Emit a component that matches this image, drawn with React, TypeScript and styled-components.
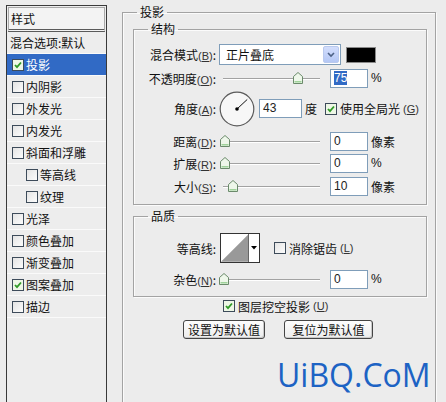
import React from "react";
import styled, { createGlobalStyle } from "styled-components";

const GlobalStyle = createGlobalStyle`
  body {
    margin: 0;
    background: #ececec;
    font-family: "Noto Sans CJK SC", "Noto Sans", sans-serif;
    font-size: 12px;
    color: #111;
  }
`;

const Frame = styled.div`
  position: relative;
  width: 446px;
  height: 402px;
  overflow: hidden;
  display: flex;
  align-items: flex-start;
  background: #ececec;
`;

/* ---------- left style list ---------- */

const StyleList = styled.div`
  margin: 5px 0 0 6px;
  width: 99px;
  height: 420px;
  border: 1px solid #3a3a3a;
  border-bottom: none;
  background: #ededed;
  flex-shrink: 0;
`;

const ListHeader = styled.div`
  margin: 1px 1px 0;
  height: 21px;
  line-height: 21px;
  padding-left: 2px;
  border: 1px solid #a9a9a9;
  border-bottom: 3px double #5a5a5a;
  background: #f3f3f3;
`;

const ListRow = styled.div<{ $indent?: number; $selected?: boolean }>`
  height: 21px;
  display: flex;
  align-items: center;
  gap: 2px;
  padding-left: ${(p) => p.$indent ?? 3}px;
  border-bottom: 1px solid #fafafa;
  background: ${(p) => (p.$selected ? "#316ac5" : "transparent")};
  color: ${(p) => (p.$selected ? "#fff" : "#111")};
  white-space: nowrap;
`;

const Box = styled.span<{ $checked?: boolean }>`
  width: 12px;
  height: 12px;
  box-sizing: border-box;
  border: 1px solid #3d4b5a;
  background: ${(p) => (p.$checked ? "#eef7e6" : "linear-gradient(135deg, #e4e4e4, #fcfcfc)")};
  display: inline-flex;
  align-items: center;
  justify-content: center;
  flex-shrink: 0;
`;

const Check = ({ checked }: { checked?: boolean }) => (
  <Box $checked={checked}>
    {checked && (
      <svg width="8" height="8" viewBox="0 0 8 8">
        <path d="M1 4 L3 6.2 L7 1.5" fill="none" stroke="#2f9a26" strokeWidth="1.8" />
      </svg>
    )}
  </Box>
);

/* ---------- right panel ---------- */

const Group = styled.fieldset<{ $w: number; $mt: number; $ml: number; $h?: number }>`
  box-sizing: border-box;
  width: ${(p) => p.$w}px;
  ${(p) => (p.$h ? `height: ${p.$h}px;` : "")}
  margin: ${(p) => p.$mt}px 0 0 ${(p) => p.$ml}px;
  padding: 0;
  min-width: 0;
  border: 1px solid #a3a3a3;
  box-shadow: inset 1px 1px 0 #fbfbfb, 1px 1px 0 #fbfbfb;
  flex-shrink: 0;
`;

const Legend = styled.legend`
  margin-left: 14px;
  padding: 0 3px;
  line-height: 14px;
  font-size: 12px;
`;

const Section = styled.div<{ $pt: number; $pb: number }>`
  display: flex;
  flex-direction: column;
  padding: ${(p) => p.$pt}px 0 ${(p) => p.$pb}px;
`;

const Row = styled.div<{ $h: number; $mt?: number }>`
  display: flex;
  align-items: center;
  height: ${(p) => p.$h}px;
  margin-top: ${(p) => p.$mt ?? 0}px;
  white-space: nowrap;
`;

const Label = styled.span`
  width: 82px;
  flex-shrink: 0;
  text-align: right;
`;

const Key = styled.u`
  font-family: "Liberation Sans", Arial, sans-serif;
  font-size: 11px;
  color: #333;
`;

const Paren = styled.span`
  font-family: "Liberation Sans", Arial, sans-serif;
  font-size: 11px;
  color: #333;
`;

const Hot = ({ k }: { k: string }) => (
  <Paren>
    (<Key>{k}</Key>)
  </Paren>
);

const Select = styled.div`
  margin-left: 3px;
  width: 122px;
  height: 21px;
  box-sizing: border-box;
  border: 1px solid #7f9db9;
  background: #fff;
  display: flex;
  align-items: center;
`;

const SelectText = styled.span`
  flex: 1;
  padding-left: 6px;
`;

const SelectButton = styled.span`
  width: 16px;
  height: 17px;
  margin-right: 1px;
  border-radius: 2px;
  background: linear-gradient(#d3defc, #b4c7f5);
  border: 1px solid #b9c9ee;
  box-sizing: border-box;
  display: flex;
  align-items: center;
  justify-content: center;
`;

const Swatch = styled.span`
  margin-left: 5px;
  width: 30px;
  height: 16px;
  box-sizing: border-box;
  background: #000;
  border: 1px solid #8a8a8a;
`;

const Track = styled.div<{ $ml: number }>`
  position: relative;
  margin-left: ${(p) => p.$ml}px;
  width: 97px;
  height: 20px;
  flex-shrink: 0;
  &::before {
    content: "";
    position: absolute;
    left: 0;
    right: 0;
    top: 10px;
    height: 1px;
    background: #a2a2a2;
    box-shadow: 0 1px 0 #fff;
  }
`;

const Thumb = styled.svg`
  position: absolute;
  top: 4px;
`;

const Slider = ({ at, ml = 7 }: { at: number; ml?: number }) => (
  <Track $ml={ml}>
    <Thumb width="10" height="12" viewBox="0 0 10 12" style={{ left: at - 5 }}>
      <path d="M5 0.5 L9.5 4.5 V11.5 H0.5 V4.5 Z" fill="#eef7ea" stroke="#6b8a6b" />
      <path d="M1.5 9 H8.5 V10.5 H1.5 Z" fill="#9fd29a" />
    </Thumb>
  </Track>
);

const Field = styled.div<{ $w: number; $ml: number }>`
  margin-left: ${(p) => p.$ml}px;
  width: ${(p) => p.$w}px;
  height: 19px;
  box-sizing: border-box;
  border: 1px solid #7f9db9;
  background: #fff;
  padding-left: 3px;
  font-family: "Liberation Sans", Arial, sans-serif;
  font-size: 12px;
  line-height: 17px;
  color: #222;
  flex-shrink: 0;
`;

const Picked = styled.span`
  background: #316ac5;
  color: #fff;
`;

const Unit = styled.span<{ $ml?: number }>`
  margin-left: ${(p) => p.$ml ?? 3}px;
`;

const PctUnit = styled(Unit)`
  font-family: "Liberation Sans", Arial, sans-serif;
  font-size: 12px;
`;

const Dial = styled.svg`
  margin-left: 3px;
  flex-shrink: 0;
`;

const CheckLabel = styled.span<{ $ml: number }>`
  display: inline-flex;
  align-items: center;
  gap: 3px;
  margin-left: ${(p) => p.$ml}px;
`;

const Contour = styled.div`
  margin-left: 4px;
  width: 40px;
  height: 30px;
  box-sizing: border-box;
  border: 1px solid #333;
  display: flex;
  background: #fff;
  flex-shrink: 0;
`;

const ContourDrop = styled.span`
  width: 10px;
  border-left: 1px solid #666;
  display: flex;
  align-items: center;
  justify-content: center;
`;

const Footer = styled.div`
  display: flex;
  flex-direction: column;
`;

const ButtonRow = styled.div`
  display: flex;
  gap: 19px;
  margin: 7px 0 0 60px;
`;

const Button = styled.button<{ $w: number }>`
  width: ${(p) => p.$w}px;
  height: 19px;
  padding: 0;
  border: 1px solid #444;
  border-radius: 3px;
  background: linear-gradient(#fdfdfd, #ececec);
  box-shadow: inset -1px -1px 0 #c9c9c9;
  font-family: "Noto Sans CJK SC", "Noto Sans", sans-serif;
  font-size: 12px;
  line-height: 16px;
  color: #111;
`;

const Watermark = styled.div`
  position: absolute;
  left: 277px;
  top: 359px;
  font-family: "Open Sans", "Noto Sans", sans-serif;
  font-size: 32px;
  line-height: 32px;
  color: #1d63c4;
  letter-spacing: 0px;
`;

const styleItems: { name: string; checked?: boolean; indent?: boolean }[] = [
  { name: "内阴影" },
  { name: "外发光" },
  { name: "内发光" },
  { name: "斜面和浮雕" },
  { name: "等高线", indent: true },
  { name: "纹理", indent: true },
  { name: "光泽" },
  { name: "颜色叠加" },
  { name: "渐变叠加" },
  { name: "图案叠加", checked: true },
  { name: "描边" },
];

const angle = 43;
const rad = (angle * Math.PI) / 180;

export default function App() {
  return (
    <Frame>
      <GlobalStyle />
      <StyleList>
        <ListHeader>样式</ListHeader>
        <ListRow>混合选项:默认</ListRow>
        <ListRow $indent={5} $selected>
          <Check checked />
          投影
        </ListRow>
        {styleItems.map((it) => (
          <ListRow key={it.name} $indent={it.indent ? 19 : 5}>
            <Check checked={it.checked} />
            {it.name}
          </ListRow>
        ))}
      </StyleList>

      <Group $w={314} $h={420} $mt={5} $ml={15}>
        <Legend>投影</Legend>

        <Group $w={294} $mt={3} $ml={10}>
          <Legend>结构</Legend>
          <Section $pt={8} $pb={8}>
            <Row $h={21}>
              <Label>
                混合模式<Hot k="B" />:
              </Label>
              <Select>
                <SelectText>正片叠底</SelectText>
                <SelectButton>
                  <svg width="8" height="6" viewBox="0 0 8 6">
                    <path d="M1 1 L4 4 L7 1" fill="none" stroke="#4d6185" strokeWidth="1.6" />
                  </svg>
                </SelectButton>
              </Select>
              <Swatch />
            </Row>
            <Row $h={20} $mt={3}>
              <Label>
                不透明度<Hot k="O" />:
              </Label>
              <Slider at={75} />
              <Field $w={38} $ml={10}>
                <Picked>75</Picked>
              </Field>
              <PctUnit>%</PctUnit>
            </Row>
            <Row $h={35} $mt={3}>
              <Label>
                角度<Hot k="A" />:
              </Label>
              <Dial width="36" height="36" viewBox="0 0 36 36">
                <circle cx="18" cy="18" r="16.8" fill="#f7f7f7" stroke="#5a5a5a" strokeWidth="1.2" />
                <line
                  x1="18"
                  y1="18"
                  x2={18 + 14 * Math.cos(rad)}
                  y2={18 - 14 * Math.sin(rad)}
                  stroke="#111"
                  strokeWidth="1"
                />
                <circle cx="18" cy="18" r="1.8" fill="#000" />
              </Dial>
              <Field $w={43} $ml={4}>
                {angle}
              </Field>
              <Unit>度</Unit>
              <CheckLabel $ml={8}>
                <Check checked />
                使用全局光<Hot k="G" />
              </CheckLabel>
            </Row>
            <Row $h={20} $mt={5}>
              <Label>
                距离<Hot k="D" />:
              </Label>
              <Slider at={2} />
              <Field $w={38} $ml={10}>
                0
              </Field>
              <Unit>像素</Unit>
            </Row>
            <Row $h={20} $mt={2}>
              <Label>
                扩展<Hot k="R" />:
              </Label>
              <Slider at={2} />
              <Field $w={38} $ml={10}>
                0
              </Field>
              <PctUnit>%</PctUnit>
            </Row>
            <Row $h={20} $mt={3}>
              <Label>
                大小<Hot k="S" />:
              </Label>
              <Slider at={10} />
              <Field $w={38} $ml={10}>
                10
              </Field>
              <Unit>像素</Unit>
            </Row>
          </Section>
        </Group>

        <Group $w={294} $mt={4} $ml={10}>
          <Legend>品质</Legend>
          <Section $pt={10} $pb={7}>
            <Row $h={30}>
              <Label>等高线:</Label>
              <Contour>
                <svg width="28" height="28" viewBox="0 0 28 28">
                  <path d="M0 28 L28 0 V28 Z" fill="#999" />
                </svg>
                <ContourDrop>
                  <svg width="6" height="4" viewBox="0 0 6 4">
                    <path d="M0 0 H6 L3 3.5 Z" fill="#000" />
                  </svg>
                </ContourDrop>
              </Contour>
              <CheckLabel $ml={14}>
                <Check />
                消除锯齿<Hot k="L" />
              </CheckLabel>
            </Row>
            <Row $h={20} $mt={6}>
              <Label>
                杂色<Hot k="N" />:
              </Label>
              <Slider at={1} />
              <Field $w={38} $ml={10}>
                0
              </Field>
              <PctUnit>%</PctUnit>
            </Row>
          </Section>
        </Group>

        <Footer>
          <Row $h={14} $mt={2}>
            <CheckLabel $ml={100}>
              <Check checked />
              图层挖空投影<Hot k="U" />
            </CheckLabel>
          </Row>
          <ButtonRow>
            <Button $w={82}>设置为默认值</Button>
            <Button $w={89}>复位为默认值</Button>
          </ButtonRow>
        </Footer>
      </Group>

      <Watermark>UiBQ.CoM</Watermark>
    </Frame>
  );
}
